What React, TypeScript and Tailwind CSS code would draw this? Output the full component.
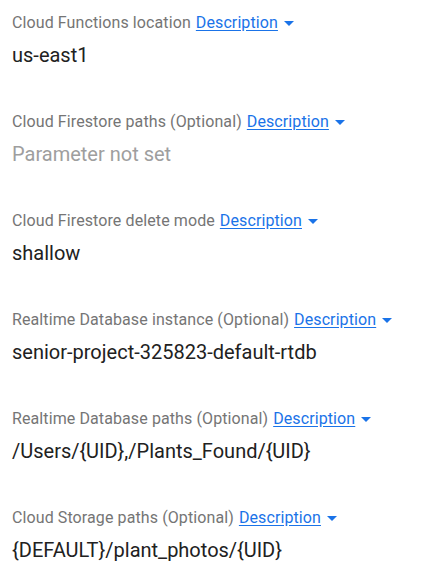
const params = [
  { label: 'Cloud Functions location', value: 'us-east1' },
  { label: 'Cloud Firestore paths (Optional)', value: null },
  { label: 'Cloud Firestore delete mode', value: 'shallow' },
  { label: 'Realtime Database instance (Optional)', value: 'senior-project-325823-default-rtdb' },
  { label: 'Realtime Database paths (Optional)', value: '/Users/{UID},/Plants_Found/{UID}' },
  { label: 'Cloud Storage paths (Optional)', value: '{DEFAULT}/plant_photos/{UID}' },
];

function Caret() {
  return (
    <svg width="24" height="24" viewBox="0 0 24 24" className="fill-[#1a73e8] -ml-[6px] shrink-0">
      <path d="M7 10l5 5 5-5z" />
    </svg>
  );
}

export default function App() {
  return (
    <div className="w-[447px] h-[583px] bg-white pt-[12px] px-[12px] font-['Roboto',_'Liberation_Sans',_sans-serif] overflow-hidden">
      {params.map(p => (
        <div key={p.label} className="h-[99px]">
          <div className="flex items-center h-[21px] text-[16px] leading-[21px] tracking-[0.1px] gap-[5px] whitespace-nowrap">
            <span className="text-[#757575]">{p.label}</span>
            <span className="text-[#1a73e8] underline underline-offset-2">Description</span>
            <Caret />
          </div>
          <div className={`mt-[8px] text-[20px] leading-[28px] whitespace-nowrap ${p.value ? 'text-[#212121]' : 'text-[#9e9e9e]'}`}>
            {p.value ?? 'Parameter not set'}
          </div>
        </div>
      ))}
    </div>
  );
}
